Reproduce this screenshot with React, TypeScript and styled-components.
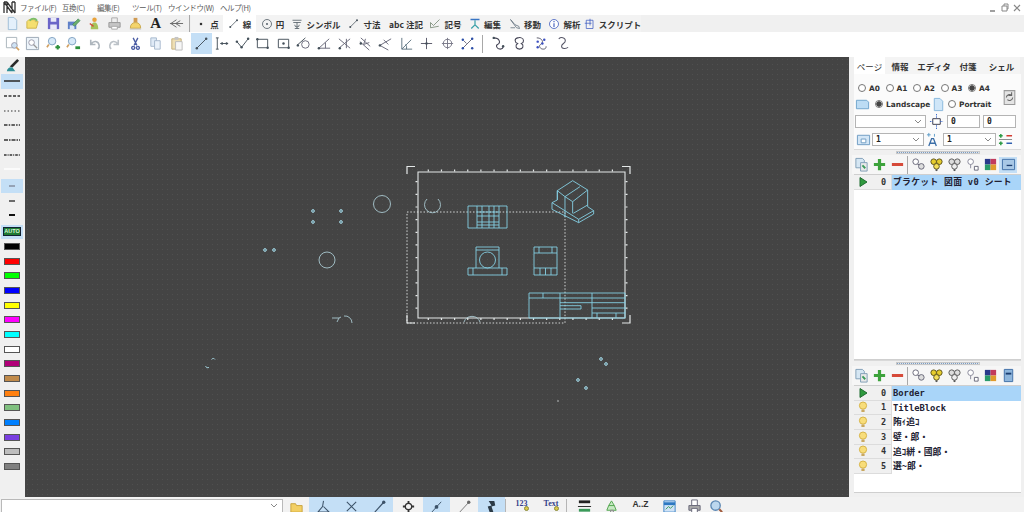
import React from 'react';
import styled, { createGlobalStyle } from 'styled-components';

const Global = createGlobalStyle`
  html, body { margin: 0; padding: 0; width: 1024px; height: 512px; overflow: hidden; background: #f0f0f0; }
  #root { width: 1024px; height: 512px; }
`;
const jp = `"Noto Sans CJK JP", "Liberation Sans", sans-serif`;
const Win = styled.div`display:flex;flex-direction:column;width:1024px;height:512px;overflow:hidden;font-family:${jp};`;
const MenuBar = styled.div`height:15px;background:#fff;display:flex;align-items:center;color:#5a5a5a;font-size:7.500px;letter-spacing:-0.4px;`;
const Logo = styled.svg`width:14px;height:13px;margin:0 3px 0 3px;`;
const MenuItem = styled.span<{ $w: number }>`width:${p => p.$w}px;white-space:nowrap;flex:none;`;
const WinCtl = styled.div`margin-left:auto;display:flex;gap:4px;padding-right:3px;`;
const TabStrip = styled.div`height:17px;background:#f0f0f0;display:flex;align-items:center;`;
const IconGroup = styled.div`display:flex;align-items:center;padding-left:2px;width:188px;box-sizing:border-box;`;
const Btn = styled.div<{ $w?: number; $on?: boolean }>`
  width:${p => p.$w ?? 20.5}px;height:100%;flex:none;display:flex;align-items:center;justify-content:center;
  background:${p => (p.$on ? '#c4dff6' : 'transparent')};
`;
const Ico = styled.svg`width:15px;height:15px;flex:none;`;
const BigA = styled.span`font:bold 15px "Liberation Serif",serif;color:#222;`;
const Tab = styled.div<{ $w: number; $on?: boolean }>`
  width:${p => p.$w}px;height:17px;flex:none;display:flex;align-items:center;justify-content:center;gap:3px;
  font-size:8.500px;font-weight:700;color:#333;white-space:nowrap;background:${p => (p.$on ? '#fff' : '#f3f3f3')};
  svg{width:12px;height:12px;}
`;
const ToolRow = styled.div`height:25px;background:#fff;display:flex;align-items:flex-start;padding-top:1px;box-sizing:border-box;`;
const ToolCell = styled.div`height:21px;display:flex;align-items:center;`;
const ToolLeft = styled(ToolCell)`padding-left:2px;width:191px;box-sizing:border-box;`;
const VSep = styled.div<{ $m?: number }>`width:1px;height:18px;background:#a8a8a8;margin:0 ${p => p.$m ?? 2}px;flex:none;`;
const Main = styled.div`flex:1;display:flex;min-height:0;`;
const LeftBar = styled.div`width:25px;flex:none;background:#f0f0f0;display:flex;flex-direction:column;`;
const LeftItem = styled.div<{ $on?: boolean; $h?: number; $mt?: number }>`
  height:${p => p.$h ?? 14.67}px;width:22px;margin:${p => p.$mt ?? 0}px 0 0 1px;flex:none;display:flex;align-items:center;justify-content:center;
  background:${p => (p.$on ? '#c4dff6' : 'transparent')};
`;
const Swatch = styled.div<{ $c: string }>`width:14px;height:5px;background:${p => p.$c};border:1px solid #555;`;
const AutoTag = styled.div`width:16px;height:7px;background:#1f7a32;border:1px solid #123;color:#d8f5d8;font:bold 5.500px/7px "Liberation Sans",sans-serif;text-align:center;`;
const LineMark = styled.svg`width:18px;height:4px;`;
const Canvas = styled.div`
  width:824px;flex:none;background-color:#444;
  background-image:radial-gradient(circle,#505050 0.7px,transparent 0.9px);background-size:5px 5px;
`;
const Draw = styled.svg`display:block;width:824px;height:440px;`;
const Dock = styled.div`flex:1;background:#f0f0f0;padding-left:5px;padding-right:3px;display:flex;flex-direction:column;min-width:0;`;
const DockTabs = styled.div`height:17px;display:flex;flex:none;`;
const DockTab = styled.div<{ $w: number; $on?: boolean }>`
  width:${p => p.$w}px;flex:none;display:flex;align-items:center;justify-content:center;font-size:8.500px;font-weight:${p => (p.$on ? 400 : 700)};
  color:#333;background:${p => (p.$on ? '#fff' : '#f4f4f4')};
`;
const PageBox = styled.div`height:75px;flex:none;background:#fbfbfb;display:flex;flex-direction:column;`;
const PageTop = styled.div`display:flex;`;
const PageCol = styled.div`display:flex;flex-direction:column;width:147px;flex:none;`;
const RefreshSlot = styled.div`margin-top:13px;flex:none;svg{width:17px;height:17px;}`;
const SetRow = styled.div<{ $h: number; $pl?: number; $pt?: number }>`height:${p => p.$h}px;box-sizing:border-box;display:flex;align-items:center;padding:${p => p.$pt ?? 0}px 0 0 ${p => p.$pl ?? 0}px;`;
const RadioCell = styled.div<{ $w?: number; $ml?: number }>`width:${p => (p.$w ? `${p.$w}px` : '27.5px')};margin-left:${p => p.$ml ?? 0}px;flex:none;display:flex;align-items:center;gap:3px;font:bold 7.400px "DejaVu Sans",sans-serif;color:#333;white-space:nowrap;`;
const Radio = styled.span<{ $on?: boolean }>`
  width:8px;height:8px;border-radius:50%;border:1px solid #777;background:${p => (p.$on ? 'radial-gradient(circle,#444 2.4px,#fff 3px)' : '#fff')};flex:none;box-sizing:border-box;
`;
const Field = styled.div<{ $w: number; $ml?: number }>`
  width:${p => p.$w}px;height:13px;margin-left:${p => p.$ml ?? 0}px;flex:none;box-sizing:border-box;background:#fff;border:1px solid #b4b4b4;
  display:flex;align-items:center;justify-content:space-between;padding:0 3px;font:bold 8px "DejaVu Sans Mono",monospace;color:#222;
`;
const Chev = styled.svg`width:8px;height:5px;`;
const Splitter = styled.div`height:6px;flex:none;display:flex;align-items:center;justify-content:center;border-top:1px solid #d9d9d9;box-sizing:border-box;`;
const Grip = styled.div`width:84px;height:3px;background:#dfe7f0;border:1px solid #c8c8c8;box-sizing:border-box;background-image:repeating-linear-gradient(90deg,#7d9cc0 0 1px,transparent 1px 2px);`;
const LayerBar = styled.div`height:19px;flex:none;display:flex;align-items:center;background:#f6f6f6;margin-left:-2px;`;
const LBtn = styled.div<{ $w: number; $on?: boolean }>`width:${p => p.$w}px;height:16px;flex:none;display:flex;align-items:center;justify-content:center;background:${p => (p.$on ? '#c4dff6' : 'transparent')};`;
const ListBox = styled.div<{ $h: number }>`height:${p => p.$h}px;flex:none;background:#fff;border:1px solid #cfcfcf;border-width:1px 0 1px 0;box-sizing:border-box;overflow:hidden;`;
const Row = styled.div`display:flex;height:14.67px;`;
const Head = styled.div`width:38px;flex:none;box-sizing:border-box;background:#f0f0f0;border-right:1px solid #dcdcdc;border-bottom:1px solid #dcdcdc;display:flex;align-items:center;justify-content:space-between;padding:0 5px 0 3px;font:bold 8.500px "DejaVu Sans Mono",monospace;color:#333;`;
const Name = styled.div<{ $on?: boolean; $sp?: number }>`flex:1;display:flex;align-items:center;padding-left:1px;background:${p => (p.$on ? '#a9d5f9' : '#fff')};white-space:nowrap;overflow:hidden;font:bold 8.800px/1 "DejaVu Sans Mono","Noto Sans CJK JP",monospace;letter-spacing:${p => p.$sp ?? 0}px;color:#223;`;
const Mini = styled.svg`width:12px;height:12px;flex:none;`;
const CtlMark = styled(Mini)`width:8px;`;
const Gap = styled.div`flex:1;`;
const BottomBar = styled.div`height:15px;flex:none;display:flex;align-items:flex-start;background:#f2f2f2;overflow:hidden;`;
const Combo = styled.div`width:282px;height:14px;margin:2px 0 0 1px;flex:none;box-sizing:border-box;background:#fff;border:1px solid #b9b9b9;display:flex;justify-content:flex-end;padding:3px 4px 0 0;`;
const BBtn = styled.div<{ $w: number; $on?: boolean }>`width:${p => p.$w}px;height:15px;flex:none;display:flex;align-items:flex-start;justify-content:center;padding-top:2px;box-sizing:border-box;background:${p => (p.$on ? '#c4dff6' : 'transparent')};font:bold 8.500px "Liberation Sans",sans-serif;color:#333;position:relative;`;
const BSep = styled.div`width:1px;height:13px;background:#b5b5b5;margin:2px 1px 0 0;flex:none;`;
const BlueTag = styled.span`font:bold 8px/9px "Liberation Serif",serif;color:#34408a;`;
const YellowDot = styled.span`position:absolute;right:7px;top:9px;width:5px;height:5px;border-radius:50%;background:#d9c84a;border:1px solid #8a8a3a;box-sizing:border-box;`;

const k = '#44505a';
const dot = (x: number, y: number, c = k) => <circle cx={x} cy={y} r={1.3} fill={c} />;
const icons: Record<string, React.ReactNode> = {
  doc: <path d="M3.500 1.500h6l3 3v10h-9z" fill="#e4f0fb" stroke="#9dbdd6" />,
  open: <><path d="M2 13V6l2-2h7v2h3l-2 7z" fill="#f5df6f" stroke="#cdb44a" /><path d="M5 5c2-3 6-3 8 0" fill="none" stroke="#7cbf6a" strokeWidth="1.800" /></>,
  save: <><path d="M2 2h12v12H2z" fill="#6a64c8" /><path d="M5 2h6v4H5zM4.500 9h7v5h-7z" fill="#e9e9f8" /></>,
  saveas: <><path d="M2 6h9v8H2z" fill="#5f80c8" /><path d="M4 10h5v4H4z" fill="#dbe6f5" /><path d="M7 9l6-6 2 2-6 6z" fill="#6cae6a" stroke="#3b7d55" strokeWidth=".6" /></>,
  figure: <><circle cx="8" cy="4" r="2.400" fill="#e9a23a" /><path d="M4 14c0-5 2-7 4-7s4 2 4 7z" fill="#a8c35a" /><path d="M3 8l4 3" stroke="#d2503c" strokeWidth="1.600" /></>,
  print: <><path d="M5 2h6v5H5z" fill="#eee" stroke="#aaa" /><path d="M2 7h12v5H2z" fill="#c5c5c5" stroke="#999" /><path d="M5 11h6v3H5z" fill="#fff" stroke="#aaa" /></>,
  stamp: <><path d="M6 2h4v5H6z" fill="#d09a50" /><path d="M2.500 13c0-4 2-6 5.500-6s5.500 2 5.500 6z" fill="#f4d46c" stroke="#c9a84a" /><path d="M2 14h12" stroke="#c5c5c5" /></>,
  arrows: <path d="M15 8H1M8 4L2 8l6 4M12 5L7 8l5 3" fill="none" stroke="#666" strokeWidth="1" />,
  zoomwin: <><path d="M1.500 1.500h11v11h-11z" fill="none" stroke="#aab4bb" /><circle cx="10" cy="10" r="3" fill="#cfe3f4" stroke="#99a" /><path d="M12 12l3 3" stroke="#d2a060" strokeWidth="1.800" /></>,
  zoomall: <><path d="M1.500 1.500h13v13h-13z" fill="#eef5fb" stroke="#9aa8b4" /><circle cx="7" cy="7" r="3" fill="#fff" stroke="#99a" /><path d="M9 9l4 4" stroke="#999" strokeWidth="1.400" /></>,
  zoomplus: <><circle cx="6.500" cy="5.500" r="4" fill="#d7e9f8" stroke="#7ea0c0" /><path d="M3 9L1 12" stroke="#d2a060" strokeWidth="1.800" /><path d="M10 12h5M12.500 9.500v5" stroke="#2d8f3c" strokeWidth="2.200" /></>,
  zoomminus: <><circle cx="6.500" cy="5.500" r="4" fill="#d7e9f8" stroke="#7ea0c0" /><path d="M3 9L1 12" stroke="#d2a060" strokeWidth="1.800" /><path d="M10 12.500h5" stroke="#2d8f3c" strokeWidth="3" /></>,
  undo: <path d="M4 4v5h5M4.500 8.500C7 4.500 12 5 13 10c.3 1.600-.5 3-1.500 3.800" fill="none" stroke="#aeb6bd" strokeWidth="1.700" />,
  redo: <path d="M12 4v5H7M11.500 8.500C9 4.500 4 5 3 10c-.3 1.600.5 3 1.500 3.800" fill="none" stroke="#bcc2c8" strokeWidth="1.700" />,
  cut: <path d="M5.500 2l4 8M10.500 2l-4 8M5.500 11a1.600 1.600 0 1 0 .1 0M10.500 11a1.600 1.600 0 1 0 .1 0" fill="none" stroke="#4a5ca4" strokeWidth="1.400" />,
  copy: <><path d="M3 2h6v9H3z" fill="#dfeaf6" stroke="#a5b8cc" /><path d="M7 5h6v9H7z" fill="#eaf2fa" stroke="#a5b8cc" /></>,
  paste: <><path d="M3 3h10v11H3z" fill="#eedfb4" stroke="#c4af7c" /><path d="M6 1h4v3H6z" fill="#c5c5c5" /><path d="M7 6h7v9H7z" fill="#f7f7f7" stroke="#bbb" /></>,
  line: <><path d="M3 13L13 3" stroke={k} />{dot(3, 13)}{dot(13, 3)}</>,
  dim: <><path d="M2 2h3M2 14h3M3.500 2v12M7 8h8M7 8l2-1v2zM15 8l-2-1v2z" stroke={k} fill="none" /></>,
  poly: <><path d="M2 6l5 6 7-9" fill="none" stroke={k} />{dot(2, 6)}{dot(7, 12)}{dot(14, 3)}</>,
  rect: <><path d="M2.500 3.500h11v9h-11z" fill="none" stroke={k} />{dot(2.500, 3.500)}{dot(13.500, 12.500)}</>,
  rectc: <><path d="M2.500 3.500h11v9h-11z" fill="none" stroke={k} />{dot(8, 8)}{dot(13.500, 12.500)}</>,
  tan: <><circle cx="10" cy="9" r="4" fill="none" stroke="#667" /><path d="M1 10L10 2" stroke={k} />{dot(2, 10)}</>,
  fan: <><path d="M2 13L13 3M2 13h12" fill="none" stroke="#667" /><path d="M9 7v6" stroke="#667" />{dot(2, 13)}</>,
  cross: <><path d="M2 3l12 10M2 13L14 3M10 3v10" fill="none" stroke="#667" />{dot(3, 13)}</>,
  zig: <><path d="M3 2l10 9M2 6l10 9M8 3L6 9l6-2" fill="none" stroke="#667" />{dot(3, 8)}</>,
  vee: <><path d="M14 3L2 10l9 5M6 4l5 5" fill="none" stroke="#667" />{dot(2, 10)}</>,
  angle: <path d="M3 2v12h11M3 14L13 4M8 14a6 6 0 0 0-1-5" fill="none" stroke="#5c7280" />,
  plus: <><path d="M8 2v12M2 8h12" stroke="#556" />{dot(8, 8)}</>,
  target: <><circle cx="8" cy="8" r="4.500" fill="none" stroke="#778" /><path d="M8 2v12M2 8h12" stroke="#778" /></>,
  xpts: <><path d="M3 13L13 3M4 5l3 3" stroke="#667" fill="none" />{dot(3, 13, '#2c4fa8')}{dot(13, 3, '#2c4fa8')}{dot(3, 4, '#2c4fa8')}{dot(13, 13, '#2c4fa8')}</>,
  curve: <><path d="M4 2c6 0 8 5 4 7-2 1-1 5 3 5 2 0 3-1 3-3" fill="none" stroke="#445" strokeWidth="1.100" />{dot(4, 2)}{dot(14, 11)}</>,
  curve2: <path d="M6 2c-4 1-3 5 0 6-3 2-2 6 2 6s5-4 2-6c3-1 3-5 0-6-2-1-3 0-4 0z" fill="none" stroke="#445" strokeWidth="1.100" />,
  curve3: <><path d="M4 2c6 0 8 5 4 7-2 1-1 5 3 5 2 0 3-1 3-3" fill="none" stroke="#556" />{dot(5, 6, '#3b4fc0')}{dot(10, 8, '#3b4fc0')}{dot(5, 12, '#3b4fc0')}{dot(12, 4, '#3b4fc0')}</>,
  curve4: <path d="M4 3c2-2 7-2 7 2 0 3-4 3-4 6 0 3 5 3 7 1" fill="none" stroke="#556" strokeWidth="1.100" />,
  pen: <><path d="M13 1l2 2-7 7-3-1z" fill="#2a2a2a" /><path d="M2 14c0-3 3-5 6-4l3 4z" fill="#2f8f96" /></>,
  dotpt: <rect x="6.500" y="6.500" width="3" height="3" fill="#333" />,
  circle: <><circle cx="8" cy="8" r="6" fill="none" stroke={k} /><circle cx="8" cy="8" r="1.200" fill={k} /></>,
  symbol: <path d="M2 3h12M3 6h10M8 6v8M5 14h6M5 9a3 3 0 0 0 6 0" fill="none" stroke={k} />,
  smallline: <><path d="M3 12L12 3" stroke={k} />{dot(3, 12)}{dot(12, 3)}</>,
  note: <path d="M2 13l11-2M2 6l4 4 8-8M2 13V6" fill="none" stroke="#6c7f6a" />,
  edit: <><path d="M2 2h12" stroke="#3975c4" strokeWidth="2" /><path d="M8 3v6M3 14l5-5 5 5" stroke="#3aa0a8" strokeWidth="1.600" fill="none" /></>,
  move: <path d="M2 2l6 7 5 2 1 3-4-1-3-4zM2 13h6" fill="none" stroke="#5b6b78" />,
  info: <><circle cx="8" cy="8" r="6" fill="#fff" stroke="#3150b8" /><path d="M8 7v5M8 4v1.600" stroke="#3150b8" strokeWidth="1.400" /></>,
  script: <><path d="M3 3h9v11H3z" fill="none" stroke="#3f5cc0" /><path d="M8 1v9M1 7h9" stroke="#3f5cc0" /></>,
  landscape: <path d="M1.500 3.500h11l2 2v7h-13z" fill="#bcdcf4" stroke="#6ea3cc" />,
  portrait: <path d="M3.500 1.500h6l3 3v10h-9z" fill="#cfe6f8" stroke="#86b6dc" />,
  refresh: <><path d="M3 1.500h10v13H3z" fill="#e4e4e4" stroke="#999" /><path d="M5 8a3 3 0 0 1 5-2M11 8a3 3 0 0 1-5 2M10 3v3H7" fill="none" stroke="#666" /></>,
  fit: <><path d="M4 5h8v6H4z" fill="#fff" stroke="#334" /><path d="M8 0v4M8 12v4M1 8h3M12 8h3" stroke="#3765c9" strokeDasharray="1.500 1" /></>,
  scale: <><path d="M3 1v4M1 3h4" stroke="#5a9bc8" /><path d="M9 2v3" stroke="#5a9bc8" /><path d="M3 15l3-8h2l3 8M4.500 12h5" stroke="#3c6fa8" strokeWidth="1.400" fill="none" /></>,
  frame: <><path d="M1.500 3.500h13v10h-13z" fill="#d3e6f6" stroke="#6d9bc2" /><path d="M5.500 7.500h5v4h-5z" fill="#fff" stroke="#6d9bc2" /></>,
  plusminus: <><path d="M5 4H1M3 2v4" stroke="#2f9c46" strokeWidth="1.600" /><path d="M9 4h6" stroke="#d33b30" strokeWidth="1.600" /><path d="M1 8h14" stroke="#888" /><path d="M5 12H1M3 10v4" stroke="#2f9c46" strokeWidth="1.600" /><path d="M9 12h6" stroke="#3060b0" strokeWidth="1.600" /></>,
  layers: <><path d="M2 1.500h7l2 2v8H2z" fill="#d5e6f3" stroke="#7f9eb6" /><path d="M7 6h7v9H7z" fill="#e9e9e9" stroke="#7f9eb6" /><path d="M9 9l3 3" stroke="#3b9b5a" strokeWidth="2" /></>,
  add: <path d="M8 2v12M2 8h12" stroke="#3da33c" strokeWidth="3.400" />,
  del: <path d="M2 8h12" stroke="#d64a3a" strokeWidth="3.200" />,
  bulbs1: <><circle cx="5" cy="5" r="3" fill="#fff" stroke="#667" /><circle cx="11" cy="10" r="3" fill="#ddd" stroke="#667" /><path d="M7 8l2 0" stroke="#667" /></>,
  bulbs2: <><circle cx="5" cy="5" r="3" fill="#e6cd2e" stroke="#5b5118" /><circle cx="11" cy="5" r="3" fill="#e6cd2e" stroke="#5b5118" /><circle cx="8" cy="10" r="3" fill="#f4e05c" stroke="#5b5118" /><path d="M7 13h2v2H7z" fill="#555" /></>,
  bulbs3: <><circle cx="5" cy="5" r="3" fill="#ddd" stroke="#555" /><circle cx="11" cy="5" r="3" fill="#ddd" stroke="#555" /><circle cx="8" cy="10" r="3" fill="#eee" stroke="#555" /><path d="M7 13h2v2H7z" fill="#555" /></>,
  bulbs4: <><circle cx="6" cy="5" r="3" fill="#fff" stroke="#889" /><path d="M10 10h4v4h-4z" fill="#fff" stroke="#667" /><path d="M6 8v4" stroke="#889" /></>,
  colorgrid: <><path d="M2 2h6v6H2z" fill="#2a3a8c" /><path d="M8 2h6v6H8z" fill="#c23a5c" /><path d="M2 8h6v6H2z" fill="#2a9a6a" /><path d="M8 8h6v6H8z" fill="#e09a2c" /></>,
  panel: <><path d="M1.500 2.500h13v11h-13z" fill="#a8c8e6" stroke="#3e6ea6" /><path d="M6 9h6" stroke="#1c3e70" strokeWidth="1.400" /></>,
  panel2: <><path d="M3.500 1.500h9v13h-9z" fill="#8fb6dc" stroke="#3e6ea6" /><path d="M5 6h6" stroke="#1c3e70" strokeWidth="2" /></>,
  play: <path d="M3 1.500v9l7-4.500z" fill="#2f9a3e" stroke="#1f6c30" />,
  bulb: <><circle cx="6" cy="4.600" r="3.600" fill="#f8dd7a" stroke="#d7b548" /><path d="M4.400 8.600h3.200v2.400H4.400z" fill="#c9a860" /></>,
  folder: <path d="M2 14V5h5l1 2h6v7z" fill="#f3cf63" stroke="#c9a23c" />,
  snap1: <path d="M8 2l-1 6-5 6h12L8 8" fill="none" stroke="#3c5268" strokeWidth="1.100" />,
  snap2: <path d="M3 3l10 10M13 3L3 13" stroke="#3c5268" strokeWidth="1.100" />,
  snap3: <><path d="M3 14L12 4" stroke="#3c5268" strokeWidth="1.200" /><circle cx="12.500" cy="3.500" r="1.800" fill="#3c5268" /></>,
  snap4: <><circle cx="8" cy="8" r="3.400" fill="none" stroke="#333" strokeWidth="1.400" /><path d="M8 2v2.500M8 11.500V14M2 8h2.500M11.500 8H14" stroke="#333" strokeWidth="2" /></>,
  snap5: <><path d="M3 14L13 3" stroke="#3c5268" /><circle cx="8" cy="8.500" r="2" fill="#3c5268" /></>,
  snap6: <><path d="M2 15L13 3" stroke="#777" /><circle cx="12.500" cy="3.500" r="1.800" fill="#666" /></>,
  snap7: <path d="M5 2h6l1 5-4 1 2 6H6L4 8l4-1z" fill="#2b3a46" />,
  view: <><path d="M2 3h12" stroke="#222" strokeWidth="3" /><path d="M1 8h14" stroke="#222" /><path d="M2 12h12" stroke="#3b9b5a" strokeWidth="3" /></>,
  tree: <><path d="M8 2L5 7h6zM5 7l-2 5h10l-2-5" fill="#c7e8c3" stroke="#4fa44c" /><path d="M7 12h3v3H7z" fill="#ddd" stroke="#888" /></>,
  chart: <><path d="M2 2h12v12H2z" fill="#cfe2f6" stroke="#3b83c6" /><path d="M2 5h12" stroke="#2c78c2" strokeWidth="3" /><path d="M4 11l3-3 2 2 3-3" stroke="#3b9b5a" fill="none" /></>,
  printer2: <><path d="M5 1h6v6H5z" fill="#fff" stroke="#667" /><path d="M2 7h12v5H2z" fill="#aaa" stroke="#667" /><path d="M5 10h6v5H5z" fill="#fff" stroke="#667" /></>,
  glass: <><circle cx="7" cy="7" r="5" fill="#bcd7ee" stroke="#5a86b2" strokeWidth="1.400" /><path d="M11 11l3 3" stroke="#a05a3c" strokeWidth="2.200" /></>,
};
const I = ({ n }: { n: string }) => <Ico viewBox="0 0 16 16">{icons[n]}</Ico>;
const L = ({ n }: { n: string }) => <Mini viewBox="0 0 12 12">{icons[n]}</Mini>;

const menu: [string, number][] = [['ファイル(F)', 42], ['互換(C)', 35], ['編集(E)', 35], ['ツール(T)', 36], ['ウインドウ(W)', 52], ['ヘルプ(H)', 40]];
const tabs: [string, string, number, boolean?][] = [
  ['dotpt', '点', 32], ['smallline', '線', 33, true], ['circle', '円', 33], ['symbol', 'シンボル', 54], ['smallline', '寸法', 43],
  ['', 'abc 注記', 40], ['note', '記号', 39], ['edit', '編集', 40], ['move', '移動', 40], ['info', '解析', 39], ['script', 'スクリプト', 57],
];
const row1 = ['doc', 'open', 'save', 'saveas', 'figure', 'print', 'stamp'];
const row2 = ['zoomwin', 'zoomall', 'zoomplus', 'zoomminus', 'undo', 'redo', 'cut', 'copy', 'paste'];
const drawTools = ['line', 'dim', 'poly', 'rect', 'rectc', 'tan', 'fan', 'cross', 'zig', 'vee', 'angle', 'plus', 'target', 'xpts'];
const curves = ['curve', 'curve2', 'curve3', 'curve4'];
const dashes = ['', '3 1.5', '1.5 2', '3.5 1.2 1.5 1.2', '4 1 1.5 1', '2.6 1 1 1'];
const colors = ['#ff0000', '#00ff00', '#0000ff', '#ffff00', '#ff00ff', '#00ffff', '#ffffff', '#b00078', '#c08a4a', '#ff8010', '#80c080', '#0080ff', '#7a3fe0', '#bdbdbd', '#808080'];
const layerTools = ['layers', 'add', 'del'];
const layerTools2 = ['bulbs1', 'bulbs2', 'bulbs3', 'bulbs4', 'colorgrid'];
const layers = ['Border', 'TitleBlock', '陏ｨ追ｺ', '壁・郎・', '追ｺ絣・國郎・', '選~郎・'];

const cy = '#84cfe3';
const wh = '#e4e8e8';
const tx = Array.from({ length: 15 }, (_, i) => 428.3 + 13.15 * i);
const ty = Array.from({ length: 11 }, (_, i) => 181.7 + 12.65 * i);
const pts: [number, number][] = [[313, 211], [341, 211], [313, 222], [341, 222], [265, 250], [274, 250], [601, 359], [606, 364], [578, 380], [586, 388]];

function Drawing() {
  return (
    <Draw viewBox="25 57 824 440" fill="none" strokeWidth="0.9">
      <path d="M418 172H625V318H418Z" stroke={wh} strokeWidth="1.100" />
      <path d="M407 174V166.500H415M622 166.500H630V174M407 315V323H415M622 323H630V315" stroke={wh} strokeWidth="1.200" />
      <path d="M407 212H565V323H407Z" stroke={wh} strokeDasharray="1.500 1.800" strokeWidth="0.900" />
      <g stroke={wh} strokeWidth="1.200">
        {tx.map(x => <path key={x} d={`M${x} 169.500v2M${x} 318v2`} />)}
        {ty.map(y => <path key={y} d={`M415.500 ${y}h2M625.500 ${y}h2`} />)}
      </g>
      <g stroke={cy}>
        <path d="M468 206H507V228H468ZM477 206V228M499 206V228M482 206V228M489 206V228M494 206V228M477 212H499M477 216H499M477 222H499M477 225H499" />
        <path d="M468 268H507V275H468ZM476 268V247H499V268M476 250H499M473 268V275M502 268V275" />
        <circle cx="487.500" cy="260" r="8" />
        <path d="M534 247H557V275H534ZM534 268H557M534 253H557M539 247V253M552 247V253M540 268V275M551 268V275M545.500 268V275" />
        <g transform="translate(400 160) scale(0.3333)" strokeWidth="2.700">
          <path d="M472 92L518 62L563 90V140L581 152V162L536 188L456 148V128L472 120Z" />
          <path d="M472 92L495 110L540 80M495 110V172M518 125V160M472 92V120M456 128L536 178L581 152M536 178V188M520 160L563 135M495 110L518 125L563 90" />
        </g>
        <path d="M529 318V293H625V318H529ZM529 298H625M560 293V318M592 293V318M543 293V298M560 302.700H625M560 305.700H581V309H560M592 308H625M592 313H625M597 313V318M616 313V318" />
      </g>
      <g stroke="#a9c8d0">
        <circle cx="382" cy="204" r="8.500" />
        <circle cx="327" cy="260" r="8" />
        <path d="M427 199A8 8 0 1 0 438 199" />
        <path d="M464 322a8.500 8.500 0 0 1 16 0" />
        <path d="M332 318h7l-2 4M339 318l2-1M344 316a7 7 0 0 1 8 7" />
      </g>
      <g stroke="#a8d8e4" strokeWidth="0.900">
        {pts.map(([x, y]) => <circle key={`${x}${y}`} cx={x} cy={y} r="1.400" fill="#5d7f8a" />)}
        <path d="M205.500 366a2.500 2.500 0 0 0 3.500 1.500M211.500 359.500a2 2 0 0 1 3.500 0" />
      </g>
      <circle cx="558" cy="401" r=".7" fill={wh} />
    </Draw>
  );
}

function LayerTools({ last, on }: { last: string; on?: boolean }) {
  return (
    <LayerBar>
      {layerTools.map(n => <LBtn key={n} $w={18}><I n={n} /></LBtn>)}
      <VSep $m={1} />
      {layerTools2.map(n => <LBtn key={n} $w={18}><I n={n} /></LBtn>)}
      <LBtn $w={18} $on={on}><I n={last} /></LBtn>
    </LayerBar>
  );
}

const chev = <Chev viewBox="0 0 8 5"><path d="M1 1l3 3 3-3" fill="none" stroke="#888" /></Chev>;

export default function App() {
  return (
    <Win>
      <Global />
      <MenuBar>
        <Logo viewBox="0 0 14 13"><path d="M1 1v11M4 1v11M1 1l8 11M4 1l8 11M9 1v11M12 1v11M1 1h3M9 1h3" fill="none" stroke="#333" strokeWidth="1.300" /></Logo>
        {menu.map(([t, w]) => <MenuItem key={t} $w={w}>{t}</MenuItem>)}
        <WinCtl>
          <CtlMark viewBox="0 0 8 12"><path d="M1 9h5" stroke="#777" strokeWidth="1.400" /></CtlMark>
          <CtlMark viewBox="0 0 8 12"><path d="M1 4h5v5H1zM3 4V2h4v5H6" fill="none" stroke="#888" /></CtlMark>
          <CtlMark viewBox="0 0 8 12"><path d="M1 3l6 6M7 3L1 9" stroke="#888" strokeWidth="1.200" /></CtlMark>
        </WinCtl>
      </MenuBar>
      <TabStrip>
        <IconGroup>
          {row1.map(n => <Btn key={n}><I n={n} /></Btn>)}
          <Btn><BigA>A</BigA></Btn>
          <Btn><I n="arrows" /></Btn>
        </IconGroup>
        <VSep $m={1} />
        {tabs.map(([n, t, w, on]) => (
          <Tab key={t} $w={w} $on={on}>{n && <I n={n} />}{t}</Tab>
        ))}
      </TabStrip>
      <ToolRow>
        <ToolLeft>{row2.map(n => <Btn key={n}><I n={n} /></Btn>)}</ToolLeft>
        <ToolCell>
          {drawTools.map((n, i) => <Btn key={n} $on={i === 0}><I n={n} /></Btn>)}
          <VSep $m={4} />
          {curves.map(n => <Btn key={n} $w={21.5}><I n={n} /></Btn>)}
        </ToolCell>
      </ToolRow>
      <Main>
        <LeftBar>
          <LeftItem $h={17}><I n="pen" /></LeftItem>
          {dashes.map((d, i) => (
            <LeftItem key={i} $on={i === 0}>
              <LineMark viewBox="0 0 18 4"><path d="M1 2h16" stroke="#333" strokeWidth={i === 2 ? 1 : 1.6} strokeDasharray={d} /></LineMark>
            </LeftItem>
          ))}
          <LeftItem><LineMark viewBox="0 0 18 4"><path d="M1 2h16" stroke="#fff" strokeWidth="1.500" /></LineMark></LeftItem>
          <LeftItem $on $mt={2}><LineMark viewBox="0 0 18 4"><path d="M6 2h6" stroke="#667" strokeWidth="1" /></LineMark></LeftItem>
          <LeftItem><LineMark viewBox="0 0 18 4"><path d="M6 2h6" stroke="#222" strokeWidth="1.300" /></LineMark></LeftItem>
          <LeftItem><LineMark viewBox="0 0 18 4"><path d="M6 2h6" stroke="#111" strokeWidth="2" /></LineMark></LeftItem>
          <LeftItem $on $mt={2}><AutoTag>AUTO</AutoTag></LeftItem>
          <LeftItem><Swatch $c="#000" /></LeftItem>
          {colors.map(c => <LeftItem key={c}><Swatch $c={c} /></LeftItem>)}
        </LeftBar>
        <Canvas><Drawing /></Canvas>
        <Dock>
          <DockTabs>
            <DockTab $w={31} $on>ページ</DockTab>
            <DockTab $w={30}>情報</DockTab>
            <DockTab $w={38}>エディタ</DockTab>
            <DockTab $w={30}>付箋</DockTab>
            <DockTab $w={37}>シェル</DockTab>
          </DockTabs>
          <PageBox>
            <PageTop>
              <PageCol>
                <SetRow $h={23} $pl={4} $pt={5}>
                  {['A0', 'A1', 'A2', 'A3', 'A4'].map(a => <RadioCell key={a}><Radio $on={a === 'A4'} />{a}</RadioCell>)}
                </SetRow>
                <SetRow $h={14}>
                  <Btn $w={17}><I n="landscape" /></Btn>
                  <RadioCell $w={55} $ml={4}><Radio $on />Landscape</RadioCell>
                  <Btn $w={16}><I n="portrait" /></Btn>
                  <RadioCell $w={39} $ml={2}><Radio />Portrait</RadioCell>
                </SetRow>
              </PageCol>
              <RefreshSlot><I n="refresh" /></RefreshSlot>
            </PageTop>
            <SetRow $h={20} $pl={1}>
              <Field $w={71}><span />{chev}</Field>
              <Btn $w={21}><I n="fit" /></Btn>
              <Field $w={33}>0</Field>
              <Field $w={33} $ml={3}>0</Field>
            </SetRow>
            <SetRow $h={17}>
              <Btn $w={18}><I n="frame" /></Btn>
              <Field $w={52}>1{chev}</Field>
              <Btn $w={19}><I n="scale" /></Btn>
              <Field $w={53}>1{chev}</Field>
              <Btn $w={18}><I n="plusminus" /></Btn>
            </SetRow>
          </PageBox>
          <Splitter><Grip /></Splitter>
          <LayerTools last="panel" on />
          <ListBox $h={186}>
            <Row>
              <Head><L n="play" />0</Head>
              <Name $on $sp={0.3}>ブラケット 図面 v0 シート</Name>
            </Row>
          </ListBox>
          <Splitter><Grip /></Splitter>
          <LayerTools last="panel2" />
          <ListBox $h={108}>
            {layers.map((t, i) => (
              <Row key={t}>
                <Head><L n={i === 0 ? 'play' : 'bulb'} />{i}</Head>
                <Name $on={i === 0}>{t}</Name>
              </Row>
            ))}
          </ListBox>
          <Gap />
        </Dock>
      </Main>
      <BottomBar>
        <Combo>{chev}</Combo>
        <BBtn $w={26}><I n="folder" /></BBtn>
        <BBtn $w={28} $on><I n="snap1" /></BBtn>
        <BBtn $w={28} $on><I n="snap2" /></BBtn>
        <BBtn $w={28} $on><I n="snap3" /></BBtn>
        <BBtn $w={30}><I n="snap4" /></BBtn>
        <BBtn $w={27} $on><I n="snap5" /></BBtn>
        <BBtn $w={28}><I n="snap6" /></BBtn>
        <BBtn $w={27} $on><I n="snap7" /></BBtn>
        <BSep />
        <BBtn $w={29}><BlueTag>123</BlueTag><YellowDot /></BBtn>
        <BBtn $w={30}><BlueTag>Text</BlueTag><YellowDot /></BBtn>
        <BSep />
        <BBtn $w={32}><I n="view" /></BBtn>
        <BBtn $w={22}><I n="tree" /></BBtn>
        <BBtn $w={37}>A..Z</BBtn>
        <BBtn $w={20}><I n="chart" /></BBtn>
        <BBtn $w={30}><I n="printer2" /></BBtn>
        <BBtn $w={14}><I n="glass" /></BBtn>
      </BottomBar>
    </Win>
  );
}
